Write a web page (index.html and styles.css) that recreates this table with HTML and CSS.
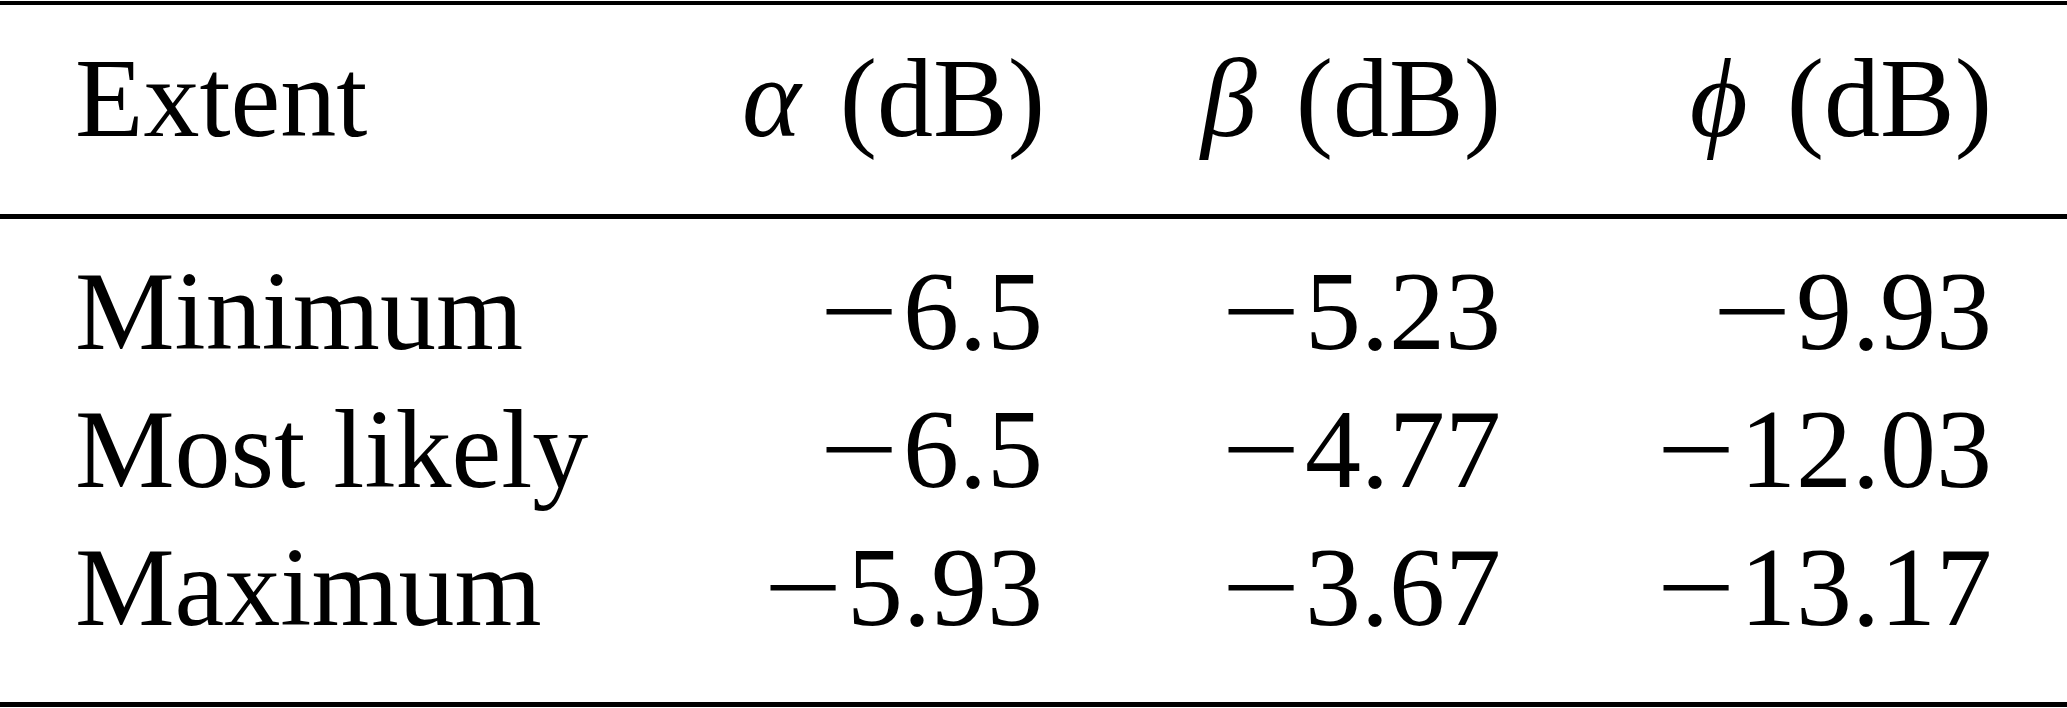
FILE: index.html
```html
<!DOCTYPE html>
<html lang="en">
<head>
    <meta charset="UTF-8">
    <meta name="viewport" content="width=device-width, initial-scale=1.0">
    <title>Extent table</title>
    <link rel="stylesheet" href="styles.css">
</head>
<body>
    <table class="extent-table">
        <colgroup>
            <col class="col-name">
            <col class="col-alpha">
            <col class="col-beta">
            <col class="col-phi">
        </colgroup>
        <thead>
            <tr>
                <th class="name">Extent</th>
                <th><i class="sym">α</i> (dB)</th>
                <th><i class="sym">β</i> (dB)</th>
                <th><i class="sym">ϕ</i> (dB)</th>
            </tr>
        </thead>
        <tbody>
            <tr>
                <td class="name">Minimum</td>
                <td><span class="minus">&minus;</span>6.5</td>
                <td><span class="minus">&minus;</span>5.23</td>
                <td><span class="minus">&minus;</span>9.93</td>
            </tr>
            <tr>
                <td class="name">Most likely</td>
                <td><span class="minus">&minus;</span>6.5</td>
                <td><span class="minus">&minus;</span>4.77</td>
                <td><span class="minus">&minus;</span>12.03</td>
            </tr>
            <tr>
                <td class="name">Maximum</td>
                <td><span class="minus">&minus;</span>5.93</td>
                <td><span class="minus">&minus;</span>3.67</td>
                <td><span class="minus">&minus;</span>13.17</td>
            </tr>
        </tbody>
    </table>
</body>
</html>
```

FILE: styles.css
```css
body {
    margin: 0;
    background-color: #fff;
    color: #000;
    font-family: "Liberation Serif", "Times New Roman", "DejaVu Serif", serif;
}
.extent-table {
    width: 2067px;
    margin-top: 1px;
    table-layout: fixed;
    border-collapse: separate;
    border-spacing: 0;
    font-size: 112px;
}
.col-name {
    width: 667px;
}
.col-alpha {
    width: 451px;
}
.col-beta {
    width: 458px;
}
.col-phi {
    width: 491px;
}
th, td {
    padding: 0 75px;
    text-align: right;
    font-weight: normal;
    white-space: nowrap;
}
th {
    line-height: 124px;
    padding-top: 31px;
    padding-bottom: 54px;
    border-top: 4px solid #000;
    border-bottom: 5px solid #000;
}
td {
    line-height: 138px;
}
tbody tr:first-child td {
    padding-top: 23px;
}
tbody tr:last-child td {
    padding-bottom: 46px;
    border-bottom: 5px solid #000;
}
.name {
    text-align: left;
}
.sym {
    font-style: italic;
    margin-right: 11px;
}
/* math minus is wider than the text one */
.minus {
    display: inline-block;
    transform: scaleX(1.25);
    transform-origin: right center;
    margin-right: 5px;
}
```
